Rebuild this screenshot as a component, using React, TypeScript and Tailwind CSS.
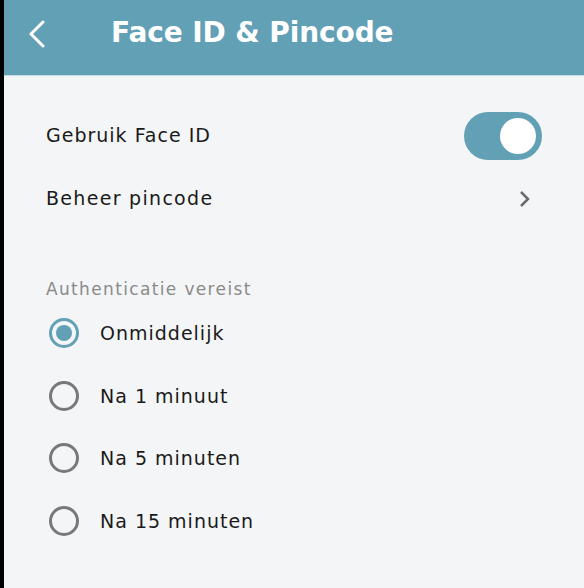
import React from "react";

const font = { fontFamily: "'DejaVu Sans', 'Noto Sans', sans-serif" };

function Radio({ checked, label }: { checked?: boolean; label: string }) {
  return (
    <div className="flex items-center h-[62.5px]">
      <div
        className={
          checked
            ? "w-[30px] h-[30px] rounded-full border-[3px] border-[#62a0b6] flex items-center justify-center ml-[45px]"
            : "w-[30px] h-[30px] rounded-full border-[3px] border-[#78787c] flex items-center justify-center ml-[45px]"
        }
      >
        {checked && <div className="w-[16px] h-[16px] rounded-full bg-[#62a0b6]" />}
      </div>
      <span className="ml-[21px] text-[19px] text-[#1a1a1a] tracking-[1px]">{label}</span>
    </div>
  );
}

export default function App() {
  return (
    <div className="w-[584px] h-[588px] flex bg-black overflow-hidden" style={font}>
      <div className="ml-[4px] flex-1 flex flex-col bg-[#f4f5f6]">
        <div className="h-[75px] bg-[#62a0b6] flex items-center border-b border-[#c6dde5] box-content">
          <svg width="20" height="28" viewBox="0 0 20 28" className="ml-[23px] -mt-[8px]">
            <path d="M16 2 L4 14 L16 26" stroke="white" strokeWidth="3" fill="none" strokeLinecap="round" strokeLinejoin="round" />
          </svg>
          <span className="ml-[64px] text-white font-bold text-[28px] tracking-[-0.1px] -mt-[9px]">Face ID &amp; Pincode</span>
        </div>
        <div className="flex items-center h-[63px] mt-[28px] pl-[42px] pr-[42px] justify-between">
          <span className="text-[19px] text-[#1a1a1a] tracking-[1px]">Gebruik Face ID</span>
          <div className="w-[78px] h-[48px] rounded-full bg-[#62a0b6] flex items-center justify-end pr-[6px]">
            <div className="w-[36px] h-[36px] rounded-full bg-white" />
          </div>
        </div>
        <div className="flex items-center h-[63px] pl-[42px] pr-[53px] justify-between">
          <span className="text-[19px] text-[#1a1a1a] tracking-[1.3px]">Beheer pincode</span>
          <svg width="12" height="18" viewBox="0 0 12 18">
            <path d="M2 2 L9 9 L2 16" stroke="#6b6b6b" strokeWidth="2.5" fill="none" />
          </svg>
        </div>
        <div className="mt-[47px] pl-[42px] text-[17px] text-[#8a8a8a] leading-[24px] tracking-[1.35px]">Authenticatie vereist</div>
        <div className="flex flex-col mt-[1px]">
          <Radio checked label="Onmiddelijk" />
          <Radio label="Na 1 minuut" />
          <Radio label="Na 5 minuten" />
          <Radio label="Na 15 minuten" />
        </div>
      </div>
    </div>
  );
}
